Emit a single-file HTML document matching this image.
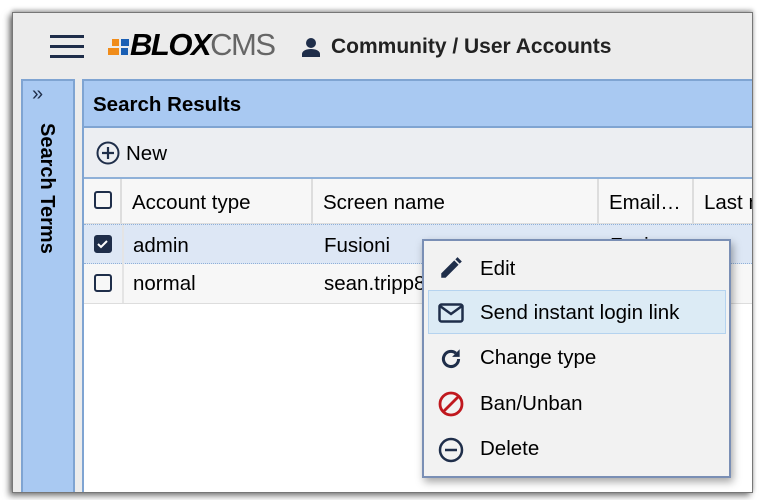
<!DOCTYPE html>
<html><head><style>
*{margin:0;padding:0;box-sizing:border-box}
body{width:760px;height:500px;background:#fff;font-family:"Liberation Sans",Arial,sans-serif;position:relative;overflow:hidden}
.win{position:absolute;left:12px;top:12px;width:741px;height:481px;background:#ececec;border:1px solid #777;box-shadow:-3px 3px 6px rgba(0,0,0,.5),0 -2px 4px rgba(0,0,0,.3);overflow:hidden}
.abs{position:absolute}
.side{left:8px;top:66px;width:54px;height:414px;background:#a9c9f2;border:2px solid #7fa4d2;border-bottom:none}
.main{left:69px;top:66px;width:680px;height:414px;background:#fff;border-left:2px solid #7fa4d2;border-top:2px solid #7fa4d2}
.sr{left:0;top:0;width:680px;height:47px;background:#a9c9f2;border-bottom:2px solid #7fa4d2;font-weight:bold;font-size:20.5px;padding:12px 0 0 9px}
.tb{left:0;top:47px;width:680px;height:51px;background:#eceef2;border-bottom:2px solid #8fb0d8;font-size:20.5px}
.th{top:98px;height:45px;background:#f7f7f7;border-bottom:1px solid #ddd;border-right:2px solid #ddd;font-size:20.5px;padding:12px 0 0 10px}
.row{left:0;width:680px;height:40px;font-size:20.5px}
.cb{width:18px;height:18px;border:2.5px solid #1f2e4a;border-radius:3px;position:absolute;left:11px}
.menu{left:422px;top:239px;width:309px;height:239px;background:#f2f2f2;border:2px solid #7a8fb5;box-shadow:2px 4px 8px rgba(0,0,0,.35);font-size:20.5px}
.mi{position:absolute;left:56px}
.ic{position:absolute;left:14px}
</style></head><body>
<div class="win">
 <div class="abs" style="left:37px;top:22px;width:34px;height:24px">
  <div style="height:3px;background:#1f2e4a;margin-bottom:7px"></div><div style="height:3px;background:#1f2e4a;margin-bottom:7px"></div><div style="height:3px;background:#1f2e4a"></div></div>
 <div class="abs" style="left:95px;top:26px">
  <div class="abs" style="left:4px;top:0;width:7px;height:7px;background:#f08c1a"></div>
  <div class="abs" style="left:13px;top:0;width:8px;height:7px;background:#1a5fb4"></div>
  <div class="abs" style="left:0;top:9px;width:11px;height:7px;background:#f08c1a"></div>
  <div class="abs" style="left:13px;top:9px;width:7px;height:7px;background:#1a5fb4"></div>
 </div>
 <div class="abs" style="left:117px;top:15px;font-size:31px;letter-spacing:-1.5px;line-height:34px"><b style="font-style:italic">BLOX</b><span style="color:#666">CMS</span></div>
 <svg class="abs" style="left:288px;top:24px" width="20" height="20" viewBox="0 0 20 20"><circle cx="10" cy="6" r="5" fill="#1f2e4a"/><path d="M1 20v-3c0-3 4-5 9-5s9 2 9 5v3z" fill="#1f2e4a"/></svg>
 <div class="abs" style="left:318px;top:22px;font-size:21px;font-weight:bold;color:#222">Community / User Accounts</div>
 <div class="abs side">
  <div class="abs" style="left:9px;top:2px;font-size:20px;color:#1f2e4a">»</div>
  <div class="abs" style="left:35px;top:42px;transform-origin:0 0;transform:rotate(90deg);font-weight:bold;font-size:20px;white-space:nowrap">Search Terms</div>
 </div>
 <div class="abs main">
  <div class="abs sr">Search Results</div>
  <div class="abs tb">
   <svg class="abs" style="left:12px;top:13px" width="24" height="24" viewBox="0 0 24 24"><circle cx="12" cy="12" r="10.5" fill="none" stroke="#1f2e4a" stroke-width="2"/><path d="M12 6v12M6 12h12" stroke="#1f2e4a" stroke-width="2.2"/></svg>
   <div class="abs" style="left:42px;top:14px">New</div>
  </div>
  <div class="abs th" style="left:0;width:38px"><div class="cb" style="top:12px;left:10px"></div></div>
  <div class="abs th" style="left:38px;width:191px">Account type</div>
  <div class="abs th" style="left:229px;width:286px">Screen name</div>
  <div class="abs th" style="left:515px;width:95px">Email…</div>
  <div class="abs th" style="left:610px;width:70px;border-right:none">Last n</div>
  <div class="abs row" style="top:143px;background:#dde7f5;border-top:1px dotted #8fb0d8;border-bottom:1px dotted #8fb0d8">
   <div class="cb" style="top:10px;left:10px;background:#1f2e4a"><svg width="14" height="14" viewBox="0 0 14 14" style="position:absolute;left:0;top:0"><path d="M2 7l3 3 6-6" stroke="#fff" stroke-width="2" fill="none"/></svg></div>
   <div class="abs" style="left:38px;top:0;height:39px;border-left:2px solid #e4e4e4"></div>
   <div class="abs" style="left:49px;top:9px">admin</div><div class="abs" style="left:240px;top:9px">Fusioni</div><div class="abs" style="left:526px;top:9px">Fusi</div>
  </div>
  <div class="abs row" style="top:183px;background:#f7f7f7;border-bottom:1px solid #ddd">
   <div class="cb" style="top:10px;left:10px"></div>
   <div class="abs" style="left:38px;top:0;height:39px;border-left:2px solid #e4e4e4"></div>
   <div class="abs" style="left:49px;top:8px">normal</div><div class="abs" style="left:240px;top:8px">sean.tripp8</div>
  </div>
 </div>
</div>
<div class="abs menu">
 <svg class="ic" style="top:14px" width="26" height="26" viewBox="0 0 24 24"><path d="M3 21v-4L15 5l4 4L7 21z" fill="#1f2e4a"/><path d="M16 4l2-2 4 4-2 2z" fill="#1f2e4a"/></svg>
 <div class="mi" style="top:16px">Edit</div>
 <div class="abs" style="left:4px;top:49px;width:298px;height:44px;background:#dcebf5;border:1px solid #b5d3ef"></div>
 <svg class="ic" style="top:62px" width="26" height="20" viewBox="0 0 26 20"><rect x="1.5" y="1.5" width="23" height="17" rx="2" fill="none" stroke="#1f2e4a" stroke-width="2.5"/><path d="M2 3l11 8 11-8" fill="none" stroke="#1f2e4a" stroke-width="2.5"/></svg>
 <div class="mi" style="top:60px">Send instant login link</div>
 <svg class="ic" style="top:105px" width="26" height="26" viewBox="0 0 24 24"><path d="M19 12a7 7 0 1 1-2.5-5.4" fill="none" stroke="#1f2e4a" stroke-width="2.8"/><path d="M20 3v7h-7z" fill="#1f2e4a"/></svg>
 <div class="mi" style="top:105px">Change type</div>
 <svg class="ic" style="top:150px" width="26" height="26" viewBox="0 0 26 26"><circle cx="13" cy="13" r="11" fill="none" stroke="#c0181e" stroke-width="2.8"/><path d="M5 21L21 5" stroke="#c0181e" stroke-width="2.8"/></svg>
 <div class="mi" style="top:151px">Ban/Unban</div>
 <svg class="ic" style="top:196px" width="26" height="26" viewBox="0 0 26 26"><circle cx="13" cy="13" r="11" fill="none" stroke="#1f2e4a" stroke-width="2.5"/><path d="M7 13h12" stroke="#1f2e4a" stroke-width="2.5"/></svg>
 <div class="mi" style="top:196px">Delete</div>
</div>
</body></html>
